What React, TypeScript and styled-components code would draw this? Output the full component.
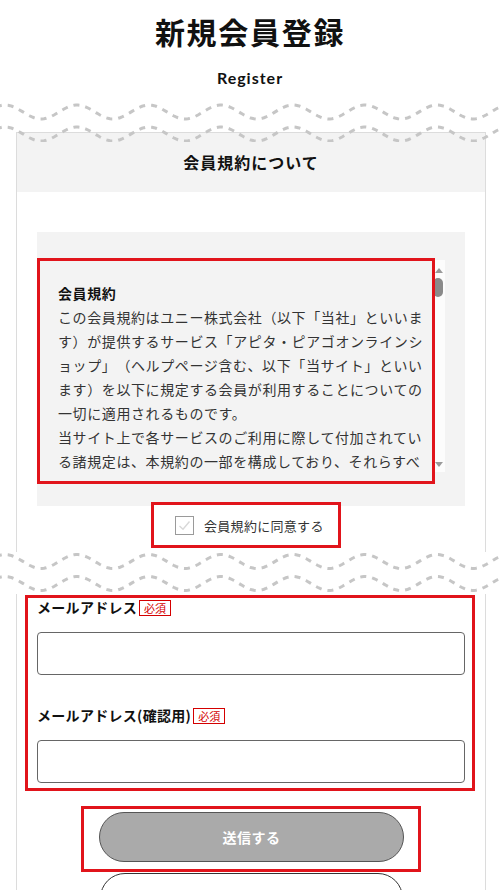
import styled, { createGlobalStyle } from "styled-components";

const GlobalStyle = createGlobalStyle`
  body {
    margin: 0;
    background: #fff;
    color: #222;
    font-family: "Noto Sans CJK JP", "Noto Sans", sans-serif;
    overflow: hidden;
  }
  * { box-sizing: border-box; }
`;

// dashed sine wave across the full page width
const wavePath = (mid: number, amp: number, width = 500, period = 72, phase = 5) => {
  const pts: string[] = [];
  for (let x = -4; x <= width + 4; x += 2) {
    const y = mid - amp * Math.cos(((x - phase) / period) * Math.PI * 2);
    pts.push(`${x},${y.toFixed(2)}`);
  }
  return "M" + pts.join(" L");
};

const Waves = ({ solid, top }: { solid?: boolean; top: number }) => (
  <WaveBand $solid={solid}>
    <svg width="500" height="44" viewBox="0 0 500 44">
      <path d={wavePath(top, 7)} fill="none" stroke="#c6c6c6" strokeWidth="3" strokeDasharray="6 6" />
      <path d={wavePath(top + 22, 7)} fill="none" stroke="#c6c6c6" strokeWidth="3" strokeDasharray="6 6" />
    </svg>
  </WaveBand>
);

const termsIntro = [
  "この会員規約はユニー株式会社（以下「当社」といいます）が提供するサービス「アピタ・ピアゴオンラインショップ」（ヘルプページ含む、以下「当サイト」といいます）を以下に規定する会員が利用することについての一切に適用されるものです。",
  "当サイト上で各サービスのご利用に際して付加されている諸規定は、本規約の一部を構成しており、それらすべてに同意いただいた上で当サイトをご利用ください。",
  "第1条（会員）",
  "1. 会員とは、本規約に同意の上、当社所定の手続きにより会員登録を申請し、当社がこれを承認した方をいいます。",
  "2. 会員登録の申請は、必ず本人が行うものとし、登録内容はすべて正確かつ最新の情報を記入していただくものとします。",
  "第2条（会員登録）",
  "1. 会員登録を希望する方は、当サイト所定の登録フォームに必要事項を入力し、送信するものとします。",
  "2. 当社は、次の各号のいずれかに該当する場合、会員登録を承認しないことがあります。",
  "第3条（メールアドレスおよびパスワードの管理）",
  "会員は、登録したメールアドレスおよびパスワードを自己の責任において管理するものとします。",
];

export default function App() {
  return (
    <Page>
      <GlobalStyle />
      <Header>
        <Title>新規会員登録</Title>
        <SubTitle>Register</SubTitle>
      </Header>

      <Waves top={14} />

      <CardTop>
        <CardHead>会員規約について</CardHead>
        <CardBody>
          <TermsBox>
            <TermsFrame>
              <TermsScroll>
                <TermsHeading>会員規約</TermsHeading>
                {termsIntro.map((t, i) => (
                  <TermsText key={i}>{t}</TermsText>
                ))}
              </TermsScroll>
              <ScrollBar>
                <ArrowUp />
                <Thumb />
                <ArrowDown />
              </ScrollBar>
            </TermsFrame>
            <Mark />
          </TermsBox>
          <AgreeRow>
            <CheckBox>
              <svg width="13" height="11" viewBox="0 0 13 11">
                <path d="M1.5 6 L5 9.2 L11.5 1.5" fill="none" stroke="#d8d8d8" strokeWidth="1.4" />
              </svg>
            </CheckBox>
            <AgreeLabel>会員規約に同意する</AgreeLabel>
          </AgreeRow>
        </CardBody>
      </CardTop>

      <Waves solid top={9.5} />

      <CardBottom>
        <FormBox>
          <FieldLabel>
            メールアドレス<Required>必須</Required>
          </FieldLabel>
          <TextInput type="email" />
          <FieldLabel $gap>
            メールアドレス(確認用)<Required>必須</Required>
          </FieldLabel>
          <TextInput type="email" />
        </FormBox>
        <SubmitBox>
          <SubmitButton type="button">送信する</SubmitButton>
        </SubmitBox>
        <BackButton type="button" />
      </CardBottom>
    </Page>
  );
}

const Page = styled.div`
  width: 500px;
  display: flex;
  flex-direction: column;
  & > * {
    flex-shrink: 0;
  }
`;

const Header = styled.header`
  padding-top: 13px;
  display: flex;
  flex-direction: column;
  align-items: center;
`;

const Title = styled.h1`
  margin: 0;
  font-size: 30px;
  line-height: 36px;
  font-weight: 700;
  letter-spacing: 1.7px;
  color: #111;
`;

const SubTitle = styled.div`
  margin-top: 19px;
  font-family: Lato, "Noto Sans", sans-serif;
  font-size: 16px;
  line-height: 20px;
  font-weight: 700;
  letter-spacing: 1px;
  color: #111;
`;

const WaveBand = styled.div<{ $solid?: boolean }>`
  position: relative;
  z-index: 1;
  height: ${(p) => (p.$solid ? "42px" : "44px")};
  margin-top: ${(p) => (p.$solid ? "0" : "10px")};
  margin-bottom: ${(p) => (p.$solid ? "0" : "-10px")};
  background: ${(p) => (p.$solid ? "#fff" : "transparent")};
  overflow: hidden;
  svg {
    display: block;
  }
`;

const CardTop = styled.section`
  margin-left: 16px;
  width: 470px;
  border: 1px solid #dcdcdc;
  border-bottom: none;
`;

const CardHead = styled.h2`
  margin: 0;
  height: 59px;
  line-height: 59px;
  text-align: center;
  background: #f3f3f3;
  font-size: 16px;
  font-weight: 700;
  letter-spacing: 1px;
  color: #111;
`;

const CardBody = styled.div`
  padding: 40px 20px 4px;
  display: flex;
  flex-direction: column;
`;

const TermsBox = styled.div`
  position: relative;
  height: 274px;
  padding-top: 28px;
  background: #f3f3f3;
`;

const TermsFrame = styled.div`
  display: flex;
  width: 408px;
  height: 212px;
`;

const TermsScroll = styled.div`
  width: 396px;
  height: 100%;
  overflow: hidden;
  padding: 21px 0 0 21px;
  font-size: 14px;
  line-height: 24px;
  letter-spacing: 0.6px;
  color: #333;
  line-break: loose;
  text-spacing-trim: space-all;
`;

const TermsHeading = styled.p`
  margin: 0;
  font-weight: 700;
  color: #111;
`;

const TermsText = styled.p`
  margin: 0;
`;

const ScrollBar = styled.div`
  width: 12px;
  height: 100%;
  background: #fcfcfc;
  display: flex;
  flex-direction: column;
  align-items: center;
  padding: 8px 0 5px;
`;

const ArrowUp = styled.span`
  width: 0;
  height: 0;
  border-left: 4px solid transparent;
  border-right: 4px solid transparent;
  border-bottom: 5px solid #9a9a9a;
`;

const ArrowDown = styled.span`
  margin-top: auto;
  width: 0;
  height: 0;
  border-left: 4px solid transparent;
  border-right: 4px solid transparent;
  border-top: 5px solid #9a9a9a;
`;

const Thumb = styled.span`
  align-self: flex-start;
  margin-top: 5px;
  width: 10px;
  height: 19px;
  border-radius: 5px;
  background: #8a8a8a;
`;

// red review frame drawn over the scroll area
const Mark = styled.div`
  position: absolute;
  left: 0;
  top: 26px;
  width: 398px;
  height: 226px;
  border: 3px solid #e1141b;
  pointer-events: none;
`;

const AgreeRow = styled.label`
  position: relative;
  align-self: flex-start;
  margin: -4px 0 0 114px;
  height: 46px;
  display: flex;
  align-items: center;
  gap: 10px;
  padding: 0 14px 0 21px;
  border: 3px solid #e1141b;
  background: #fff;
`;

const CheckBox = styled.span`
  width: 19px;
  height: 19px;
  border: 1px solid #9a9a9a;
  background: #fff;
  display: flex;
  align-items: center;
  justify-content: center;
`;

const AgreeLabel = styled.span`
  font-size: 13px;
  letter-spacing: 0.3px;
  color: #333;
`;

const CardBottom = styled.section`
  margin-left: 16px;
  width: 470px;
  border-left: 1px solid #dcdcdc;
  border-right: 1px solid #dcdcdc;
  padding: 1px 0 20px;
  display: flex;
  flex-direction: column;
  align-items: center;
`;

const FormBox = styled.div`
  align-self: stretch;
  margin: 0 10px 0 8px;
  border: 3px solid #e1141b;
  padding: 0 7px 5px 9px;
  display: flex;
  flex-direction: column;
`;

const FieldLabel = styled.div<{ $gap?: boolean }>`
  margin-top: ${(p) => (p.$gap ? "31px" : "0")};
  display: flex;
  align-items: flex-end;
  font-size: 14px;
  line-height: 18px;
  font-weight: 700;
  letter-spacing: 0.3px;
  color: #111;
`;

const Required = styled.span`
  margin-left: 2px;
  height: 16px;
  padding: 0 4px;
  border: 1px solid #d40000;
  font-size: 11px;
  line-height: 14px;
  font-weight: 400;
  letter-spacing: 0;
  color: #d40000;
`;

const TextInput = styled.input`
  margin-top: 16px;
  width: 100%;
  height: 43px;
  border: 1px solid #666;
  border-radius: 4px;
  background: #fff;
  font-size: 14px;
  padding: 0 10px;
`;

const SubmitBox = styled.div`
  margin-top: 15px;
  width: 340px;
  border: 3px solid #e1141b;
  padding: 3px 14px 7px 15px;
`;

const SubmitButton = styled.button`
  display: block;
  width: 305px;
  height: 50px;
  border: 1px solid #555;
  border-radius: 25px;
  background: #aaa;
  color: #fff;
  font-family: "Noto Sans CJK JP", sans-serif;
  font-size: 14px;
  font-weight: 700;
  letter-spacing: 0.5px;
`;

const BackButton = styled.button`
  margin-top: 1px;
  width: 303px;
  height: 50px;
  border: 1.5px solid #333;
  border-radius: 25px;
  background: #fff;
`;
